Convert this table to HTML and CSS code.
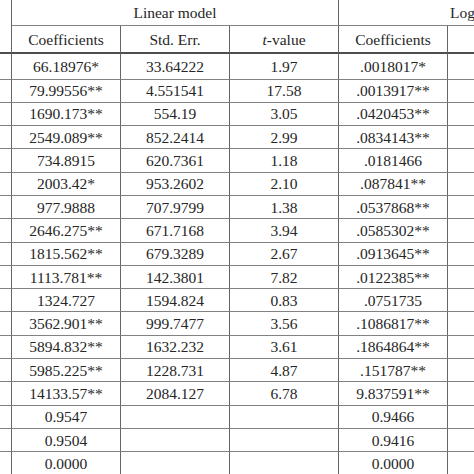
FILE: index.html
```html
<!DOCTYPE html>
<html>
<head>
<meta charset="utf-8">
<link rel="stylesheet" href="styles.css">
</head>
<body>
<div class="sheet">
  <div class="cell stub head1span"></div>
  <div class="cell group g1">Linear model</div>
  <div class="cell group g2">Log-linear model</div>

  <div class="cell sub">Coefficients</div>
  <div class="cell sub">Std. Err.</div>
  <div class="cell sub"><i>t</i>-value</div>
  <div class="cell sub">Coefficients</div>
  <div class="cell sub">Std. Err.</div>
  <div class="cell sub end"><i>t</i>-value</div>

  <div class="cell stub first"></div><div class="cell first">66.18976*</div><div class="cell first">33.64222</div><div class="cell first">1.97</div><div class="cell first">.0018017*</div><div class="cell first"></div><div class="cell first end"></div>
  <div class="cell stub"></div><div class="cell">79.99556**</div><div class="cell">4.551541</div><div class="cell">17.58</div><div class="cell">.0013917**</div><div class="cell"></div><div class="cell end"></div>
  <div class="cell stub"></div><div class="cell">1690.173**</div><div class="cell">554.19</div><div class="cell">3.05</div><div class="cell">.0420453**</div><div class="cell"></div><div class="cell end"></div>
  <div class="cell stub"></div><div class="cell">2549.089**</div><div class="cell">852.2414</div><div class="cell">2.99</div><div class="cell">.0834143**</div><div class="cell"></div><div class="cell end"></div>
  <div class="cell stub"></div><div class="cell">734.8915</div><div class="cell">620.7361</div><div class="cell">1.18</div><div class="cell">.0181466</div><div class="cell"></div><div class="cell end"></div>
  <div class="cell stub"></div><div class="cell">2003.42*</div><div class="cell">953.2602</div><div class="cell">2.10</div><div class="cell">.087841**</div><div class="cell"></div><div class="cell end"></div>
  <div class="cell stub"></div><div class="cell">977.9888</div><div class="cell">707.9799</div><div class="cell">1.38</div><div class="cell">.0537868**</div><div class="cell"></div><div class="cell end"></div>
  <div class="cell stub"></div><div class="cell">2646.275**</div><div class="cell">671.7168</div><div class="cell">3.94</div><div class="cell">.0585302**</div><div class="cell"></div><div class="cell end"></div>
  <div class="cell stub"></div><div class="cell">1815.562**</div><div class="cell">679.3289</div><div class="cell">2.67</div><div class="cell">.0913645**</div><div class="cell"></div><div class="cell end"></div>
  <div class="cell stub"></div><div class="cell">1113.781**</div><div class="cell">142.3801</div><div class="cell">7.82</div><div class="cell">.0122385**</div><div class="cell"></div><div class="cell end"></div>
  <div class="cell stub"></div><div class="cell">1324.727</div><div class="cell">1594.824</div><div class="cell">0.83</div><div class="cell">.0751735</div><div class="cell"></div><div class="cell end"></div>
  <div class="cell stub"></div><div class="cell">3562.901**</div><div class="cell">999.7477</div><div class="cell">3.56</div><div class="cell">.1086817**</div><div class="cell"></div><div class="cell end"></div>
  <div class="cell stub"></div><div class="cell">5894.832**</div><div class="cell">1632.232</div><div class="cell">3.61</div><div class="cell">.1864864**</div><div class="cell"></div><div class="cell end"></div>
  <div class="cell stub"></div><div class="cell">5985.225**</div><div class="cell">1228.731</div><div class="cell">4.87</div><div class="cell">.151787**</div><div class="cell"></div><div class="cell end"></div>
  <div class="cell stub"></div><div class="cell">14133.57**</div><div class="cell">2084.127</div><div class="cell">6.78</div><div class="cell">9.837591**</div><div class="cell"></div><div class="cell end"></div>
  <div class="cell stub"></div><div class="cell">0.9547</div><div class="cell"></div><div class="cell"></div><div class="cell">0.9466</div><div class="cell"></div><div class="cell end"></div>
  <div class="cell stub"></div><div class="cell">0.9504</div><div class="cell"></div><div class="cell"></div><div class="cell">0.9416</div><div class="cell"></div><div class="cell end"></div>
  <div class="cell stub"></div><div class="cell">0.0000</div><div class="cell"></div><div class="cell"></div><div class="cell">0.0000</div><div class="cell"></div><div class="cell end"></div>
</div>
</body>
</html>
```
FILE: styles.css
```css
html, body {
  margin: 0;
  padding: 0;
  background: #fff;
  overflow: hidden;
  width: 474px;
  height: 474px;
}

.sheet {
  display: grid;
  grid-template-columns: 12px 109px 109px 109px 109px 109px 109px;
  grid-template-rows: 26px 28px 25.5px repeat(17, 23.31px);
  width: max-content;
  font-family: "Liberation Serif", "Times New Roman", serif;
  font-size: 15.5px;
  color: #262626;
}

.cell {
  box-sizing: border-box;
  display: flex;
  align-items: center;
  justify-content: center;
  white-space: nowrap;
  border-right: 1px solid #666;
  border-bottom: 1px solid #828282;
  padding-top: 1px;
}

.cell.end {
  border-right: none;
}

.head1span {
  grid-row: 1 / span 2;
  border-bottom: 2px solid #4d4d4d;
}

.group.g1 {
  grid-column: 2 / span 3;
}

.group.g2 {
  grid-column: 5 / span 3;
  border-right: none;
  justify-content: flex-start;
  padding-left: 111px;
}

.sub {
  border-bottom: 2px solid #4d4d4d;
}
```
